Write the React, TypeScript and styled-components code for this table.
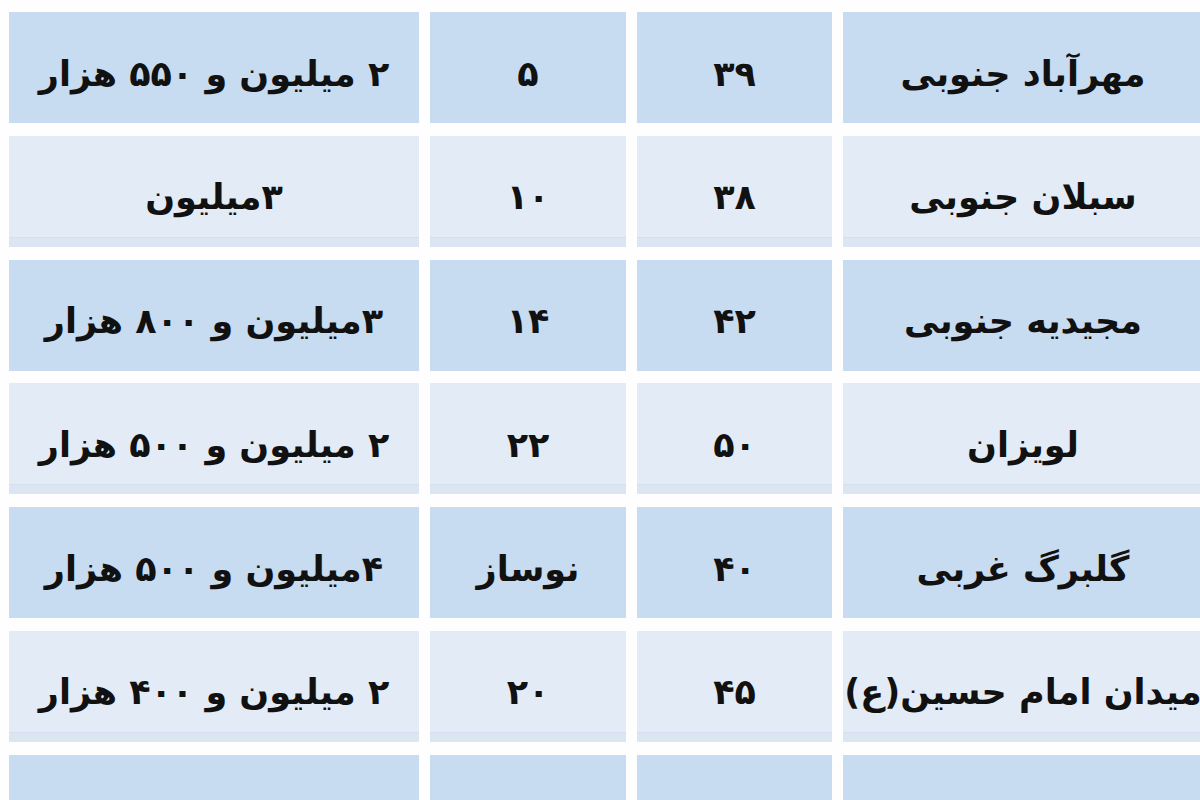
import React from "react";
import styled, { createGlobalStyle } from "styled-components";

type Row = {
  area: string;
  size: string;
  age: string;
  rent: string;
};

const rows: Row[] = [
  { area: "مهرآباد جنوبی", size: "۳۹", age: "۵", rent: "۲ میلیون و ۵۵۰ هزار" },
  { area: "سبلان جنوبی", size: "۳۸", age: "۱۰", rent: "۳میلیون" },
  { area: "مجیدیه جنوبی", size: "۴۲", age: "۱۴", rent: "۳میلیون و ۸۰۰ هزار" },
  { area: "لویزان", size: "۵۰", age: "۲۲", rent: "۲ میلیون و ۵۰۰ هزار" },
  { area: "گلبرگ غربی", size: "۴۰", age: "نوساز", rent: "۴میلیون و ۵۰۰ هزار" },
  { area: "میدان امام حسین(ع)", size: "۴۵", age: "۲۰", rent: "۲ میلیون و ۴۰۰ هزار" },
  { area: "تهرانپارس", size: "۴۶", age: "۱۵", rent: "۳میلیون و ۲۰۰ هزار" },
];

export default function App() {
  return (
    <>
      <GlobalStyle />
      <Page>
        <Table>
          {rows.map((row, i) => {
            const dark = i % 2 === 0;
            return (
              <React.Fragment key={i}>
                <Cell $dark={dark}>{row.rent}</Cell>
                <Cell $dark={dark}>{row.age}</Cell>
                <Cell $dark={dark}>{row.size}</Cell>
                <Cell $dark={dark}>{row.area}</Cell>
              </React.Fragment>
            );
          })}
        </Table>
      </Page>
    </>
  );
}

const GlobalStyle = createGlobalStyle`
  html, body {
    margin: 0;
    padding: 0;
    background: #ffffff;
    overflow: hidden;
  }
`;

const Page = styled.div`
  width: 1200px;
  height: 800px;
  overflow: hidden;
  padding: 12px 0 0 9px;
  box-sizing: border-box;
  background: #fefefe;
`;

const Table = styled.div`
  display: grid;
  grid-template-columns: 410px 196px 195px 360px;
  grid-auto-rows: 111px;
  column-gap: 11px;
  row-gap: 12.8px;
  width: 1194px;
`;

const Cell = styled.div<{ $dark: boolean }>`
  display: flex;
  align-items: center;
  justify-content: center;
  direction: rtl;
  white-space: nowrap;
  background: ${(p) => (p.$dark ? "#c7dbf1" : "#e3ebf6")};
  box-shadow: ${(p) =>
    p.$dark ? "none" : "inset 0 -9px 0 #dce6f2, inset 0 -10px 0 #d4e0ef"};
  font-family: "DejaVu Sans", "Noto Sans", sans-serif;
  font-weight: bold;
  font-size: 35px;
  color: #111111;
  padding-top: 12px;
  box-sizing: border-box;
`;
